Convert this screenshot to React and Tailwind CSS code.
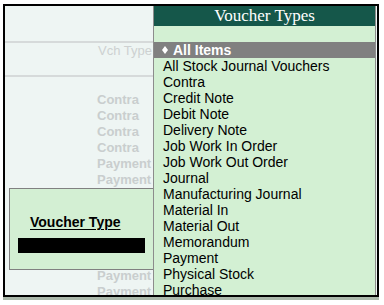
export default function App() {
  const left = [
    "Contra", "Contra", "Contra", "Contra", "Payment", "Payment", "",
    "", "", "", "", "Payment", "Payment", "Payment",
  ];
  const items = [
    "All Stock Journal Vouchers", "Contra", "Credit Note", "Debit Note",
    "Delivery Note", "Job Work In Order", "Job Work Out Order", "Journal",
    "Manufacturing Journal", "Material In", "Material Out", "Memorandum",
    "Payment", "Physical Stock", "Purchase",
  ];
  return (
    <div
      className="w-[384px] h-[305px] bg-white pl-[3px] pt-[4px]"
      style={{ fontFamily: '"Liberation Sans", Arial, sans-serif' }}
    >
      <div className="w-[376px] h-[293px] border-2 border-black bg-[#eef5f3] overflow-hidden flex shadow-[0_3px_0_#aab8aa]">
        <div className="w-[148px] shrink-0 relative">
          <div className="h-[35px]" />
          <div className="h-[2px] bg-[#d6dada]" />
          <div className="h-[16px] leading-[16px] text-[13px] text-[#cdd1d1] pl-[93px] whitespace-nowrap">
            Vch Type
          </div>
          <div className="h-[16px]" />
          <div className="h-[2px] bg-[#d6dada]" />
          <div className="h-[15px]" />
          {left.map((t, i) => (
            <div
              key={i}
              className="h-[16px] leading-[16px] text-[13px] font-bold text-[#c9cece] pl-[92px] whitespace-nowrap"
            >
              {t}
            </div>
          ))}
          <div className="absolute left-[4px] top-[182px] w-[152px] h-[82px] border border-[#808080] bg-[#d3efd3] pl-[20px] pt-[25px]">
            <div className="h-[16px] leading-[16px] text-[14px] font-bold text-black underline decoration-1 underline-offset-2 whitespace-nowrap">
              Voucher Type
            </div>
            <div className="mt-[8px] -ml-[12px] w-[127px] h-[15px] bg-black" />
          </div>
        </div>
        <div className="w-[223px] shrink-0 border-x border-[#8c8c8c] bg-[#d3f0d3] relative z-10">
          <div
            className="h-[20px] bg-[#15574a] text-white text-center text-[17px] leading-[20px]"
            style={{ fontFamily: '"Liberation Serif", "Times New Roman", serif' }}
          >
            Voucher Types
          </div>
          <div className="h-[16px]" />
          <div className="h-[16px] bg-[#808080] text-white font-bold text-[14px] leading-[16px] flex items-center pl-[8px]">
            <svg width="6" height="8" viewBox="0 0 6 8" className="mr-[5px]">
              <polygon points="3,0 6,4 3,8 0,4" fill="white" />
            </svg>
            <span>All Items</span>
          </div>
          {items.map((t) => (
            <div
              key={t}
              className="h-[16px] leading-[16px] text-[14px] text-black pl-[9px] whitespace-nowrap"
            >
              {t}
            </div>
          ))}
        </div>
      </div>
    </div>
  );
}
